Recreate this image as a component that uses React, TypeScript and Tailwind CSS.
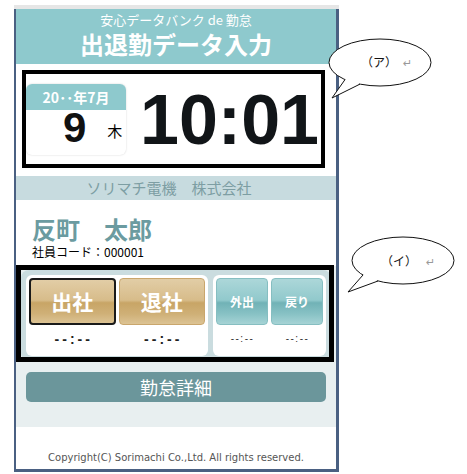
export default function App() {
  const jp = "font-['Noto_Sans_CJK_JP','Noto_Sans',sans-serif]";
  const gold =
    "flex h-[47px] items-center justify-center rounded-[4px] bg-[linear-gradient(to_bottom,#e2cda6_0%,#d7bc8a_47%,#c8a566_53%,#cfb077_78%,#dcc394_100%)] text-[21px] font-bold leading-none text-white";
  const teal =
    "flex h-[47px] items-center justify-center rounded-[4px] border border-[#86bec1] bg-[linear-gradient(to_bottom,#acd7d9_0%,#91c9cc_47%,#71b2b6_53%,#88c2c5_78%,#a6d3d5_100%)] text-[12px] font-bold leading-none text-white";

  return (
    <div className={`relative h-[474px] w-[467px] overflow-hidden bg-white pl-[14px] pt-[5px] ${jp}`}>
      <div className="w-[325px]">
        <div className="h-[4px] bg-[#e6e6e6]" />
        <div className="border-b-[3px] border-l-2 border-r-[3px] border-[#4a6082]">
          {/* header */}
          <div className="flex h-[55px] flex-col items-center bg-[#8ec9cd] pt-[3px] text-white">
            <div className="text-[13px] leading-[16px]">安心データバンク de 勤怠</div>
            <div className="mt-[2px] text-[24px] font-bold leading-[28px]">出退勤データ入力</div>
          </div>

          {/* date / time */}
          <div className="flex h-[112px] items-start pl-[10px] pt-[20px]">
            <div className="flex h-[71px] w-[100px] flex-col overflow-hidden rounded-[6px] bg-white shadow-[0_0_2px_rgba(0,0,0,0.18)]">
              <div className="h-[26px] bg-[#8ec9cd] text-center text-[14px] font-bold leading-[26px] text-white">
                20･･年7月
              </div>
              <div className="flex items-start pl-[37px]">
                <div className="font-['Liberation_Sans',sans-serif] text-[42px] font-bold leading-[36px] text-[#111]">
                  9
                </div>
                <div className="ml-[21px] mt-[13px] text-[15px] leading-[15px] text-black">木</div>
              </div>
            </div>
            <div className="ml-[14px] mt-[1px] font-['Liberation_Sans',sans-serif] text-[70px] font-bold leading-[70px] text-[#111518]">
              10:01
            </div>
          </div>

          {/* company */}
          <div className="h-[24px] bg-[#c7dbdf] pr-[14px] text-center text-[15px] leading-[24px] text-[#7d9ea3]">
            ソリマチ電機　株式会社
          </div>

          {/* name */}
          <div className="h-[66px] pl-[16px] pt-[15px]">
            <div className="text-[24px] font-bold leading-[28px] text-[#6b9ba0]">反町　太郎</div>
            <div className="mt-[2px] text-[12px] leading-[14px] text-black">社員コード：000001</div>
          </div>

          {/* buttons area */}
          <div className="h-[161px] bg-[#e8eff0] px-[5px] pt-[4px]">
            <div className="flex gap-[5px] rounded-[8px] bg-[#cadcdf] p-[5px]">
              <div className="w-[182px] rounded-[6px] bg-white px-[3px] pt-[3px]">
                <div className="grid grid-cols-2 gap-[3px]">
                  <div className={`${gold} border-2 border-[#1a1a1a]`}>出社</div>
                  <div className={`${gold} border border-[#c9a66c]`}>退社</div>
                </div>
                <div className="grid h-[31px] grid-cols-2 gap-[3px] font-['Liberation_Sans',sans-serif] text-[14px] font-bold leading-[28px] tracking-[3px] text-[#222]">
                  <div className="pl-[3px] text-center">--:--</div>
                  <div className="pl-[3px] text-center">--:--</div>
                </div>
              </div>
              <div className="w-[113px] rounded-[6px] bg-white px-[3px] pt-[3px]">
                <div className="grid grid-cols-2 gap-[3px]">
                  <div className={teal}>外出</div>
                  <div className={teal}>戻り</div>
                </div>
                <div className="grid h-[31px] grid-cols-2 gap-[3px] font-['Liberation_Sans',sans-serif] text-[10px] leading-[28px] tracking-[1.5px] text-[#333]">
                  <div className="pl-[1px] text-center">--:--</div>
                  <div className="pl-[1px] text-center">--:--</div>
                </div>
              </div>
            </div>
            <div className="mx-[5px] mt-[11px] h-[30px] rounded-[5px] bg-[#6b969b] text-center text-[18px] leading-[30px] text-white">
              勤怠詳細
            </div>
          </div>

          {/* footer */}
          <div className="flex h-[42px] items-end justify-center pb-[5px] font-['DejaVu_Sans',sans-serif] text-[10px] leading-[12px] text-[#555]">
            Copyright(C) Sorimachi Co.,Ltd. All rights reserved.
          </div>
        </div>
      </div>

      {/* annotation boxes */}
      <div className="pointer-events-none absolute left-[22px] top-[70px] h-[98px] w-[303px] border-4 border-black" />
      <div className="pointer-events-none absolute left-[16px] top-[265px] h-[97px] w-[318px] border-[5px] border-black" />

      {/* speech bubbles */}
      <svg className="pointer-events-none absolute left-0 top-0" width="467" height="474" viewBox="0 0 467 474">
        <ellipse cx="380" cy="62.5" rx="51" ry="23.5" fill="white" stroke="#111" strokeWidth="1" />
        <polygon points="345.5,79 332,98 359.5,83.5 358,80 347,77" fill="white" />
        <polyline points="345,79.6 332,98 360,84.1" fill="none" stroke="#111" strokeWidth="1" />
        <text x="361" y="67" fontSize="12" fill="#111" fontFamily="'Noto Sans CJK JP', sans-serif">（ア）</text>
        <text x="403" y="67" fontSize="11" fill="#999" fontFamily="'DejaVu Sans', sans-serif">↵</text>

        <ellipse cx="403" cy="260.5" rx="51" ry="23.5" fill="white" stroke="#111" strokeWidth="1" />
        <polygon points="363.5,274.5 348,292 377.5,280.5 376,277 365,272" fill="white" />
        <polyline points="363,275 348,292 378,281" fill="none" stroke="#111" strokeWidth="1" />
        <text x="381" y="266" fontSize="12" fill="#111" fontFamily="'Noto Sans CJK JP', sans-serif">（イ）</text>
        <text x="426" y="266" fontSize="11" fill="#999" fontFamily="'DejaVu Sans', sans-serif">↵</text>
      </svg>
    </div>
  );
}
